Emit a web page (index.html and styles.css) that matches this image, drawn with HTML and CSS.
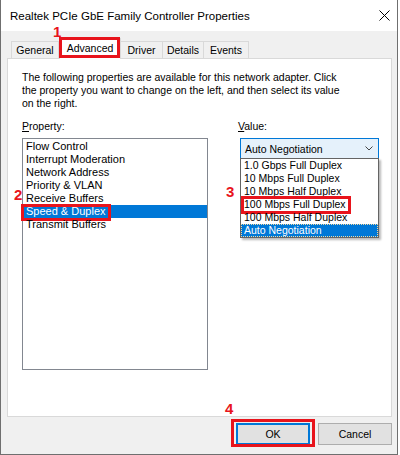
FILE: index.html
```html
<!DOCTYPE html>
<html>
<head>
<meta charset="utf-8">
<link rel="stylesheet" href="styles.css">
</head>
<body>
<div class="window">
  <div class="titlebar">
    <span class="title">Realtek PCIe GbE Family Controller Properties</span>
    <svg class="close" width="11" height="11" viewBox="0 0 11 11"><path d="M0.5 0.5L10.5 10.5M10.5 0.5L0.5 10.5" stroke="#000" stroke-width="1" fill="none"/></svg>
  </div>
  <div class="client">
    <div class="tabs">
      <div class="tab tab-general">General</div>
      <div class="tab tab-advanced">Advanced<span class="mark mark-tab"></span><span class="num num1">1</span></div>
      <div class="tab tab-driver">Driver</div>
      <div class="tab tab-details">Details</div>
      <div class="tab tab-events">Events</div>
    </div>
    <div class="page">
      <p class="intro">The following properties are available for this network adapter. Click<br>the property you want to change on the left, and then select its value<br>on the right.</p>
      <div class="cols">
        <div class="col">
          <div class="label"><u>P</u>roperty:</div>
          <div class="listbox">
            <div class="item">Flow Control</div>
            <div class="item">Interrupt Moderation</div>
            <div class="item">Network Address</div>
            <div class="item">Priority &amp; VLAN</div>
            <div class="item">Receive Buffers</div>
            <div class="item selected">Speed &amp; Duplex<span class="mark mark-speed"></span><span class="num num2">2</span></div>
            <div class="item">Transmit Buffers</div>
          </div>
        </div>
        <div class="col">
          <div class="label"><u>V</u>alue:</div>
          <div class="combo">
            <span>Auto Negotiation</span>
            <svg class="chev" width="8" height="5" viewBox="0 0 8 5"><path d="M0.5 0.5L4 4L7.5 0.5" stroke="#444" stroke-width="1" fill="none"/></svg>
            <div class="dropdown">
              <div class="opt">1.0 Gbps Full Duplex</div>
              <div class="opt">10 Mbps Full Duplex</div>
              <div class="opt">10 Mbps Half Duplex</div>
              <div class="opt opt-mark">100 Mbps Full Duplex<span class="mark mark-opt"></span><span class="num num3">3</span></div>
              <div class="opt">100 Mbps Half Duplex</div>
              <div class="opt opt-selected">Auto Negotiation</div>
            </div>
          </div>
        </div>
      </div>
    </div>
    <div class="buttons">
      <button class="btn btn-default">OK<span class="mark mark-ok"></span><span class="num num4">4</span></button>
      <button class="btn">Cancel</button>
    </div>
  </div>
</div>
</body>
</html>
```
FILE: styles.css
```css
html, body {
  margin: 0;
  padding: 0;
  background: #ffffff;
}

.window {
  width: 398px;
  height: 455px;
  box-sizing: border-box;
  border: 1px solid #6f6f6f;
  border-top: none;
  display: flex;
  flex-direction: column;
  font-family: "Liberation Sans", Arial, sans-serif;
  color: #000;
}

.titlebar {
  flex: none;
  height: 31px;
  background: #fff;
  display: flex;
  align-items: center;
  justify-content: space-between;
  padding: 0 7px 0 9px;
}

.title {
  font-size: 11.5px;
}

.close {
  display: block;
}

.client {
  flex: 1;
  background: #f0f0f0;
  padding: 7px 5px 0 6px;
  display: flex;
  flex-direction: column;
}

.tabs {
  display: flex;
  align-items: flex-end;
  height: 20px;
  padding-left: 4px;
  position: relative;
  z-index: 1;
}

.tab {
  height: 17px;
  box-sizing: border-box;
  border: 1px solid #d9d9d9;
  border-bottom: none;
  background: #f0f0f0;
  font-size: 10.5px;
  display: flex;
  align-items: center;
  justify-content: center;
  white-space: nowrap;
}

.tab-general { width: 48px; }
.tab-advanced {
  width: 62px;
  height: 21px;
  margin-bottom: -1px;
  background: #fff;
  position: relative;
  z-index: 2;
  padding-bottom: 2px;
}
.tab-driver { width: 43px; margin-left: -1px; }
.tab-details { width: 42px; margin-left: -1px; }
.tab-events { width: 46px; margin-left: -1px; }

.page {
  flex: none;
  height: 359px;
  box-sizing: border-box;
  border: 1px solid #d9d9d9;
  background: #fff;
  padding: 12px 0 0 14px;
}

.intro {
  margin: 0;
  font-size: 10.5px;
  line-height: 13px;
  white-space: nowrap;
}

.cols {
  display: grid;
  grid-template-columns: 186px 141px;
  column-gap: 30px;
  margin-top: 10px;
}

.label {
  font-size: 10.5px;
  line-height: 13px;
}

.listbox {
  margin-top: 5px;
  height: 232px;
  box-sizing: border-box;
  border: 1px solid #828790;
  padding-top: 1px;
}

.item {
  height: 13px;
  line-height: 13px;
  font-size: 11px;
  padding-left: 3px;
  white-space: nowrap;
  position: relative;
}

.item.selected {
  background: #0078d7;
  color: #fff;
}

.combo {
  margin: 5px 0 0 2px;
  height: 21px;
  box-sizing: border-box;
  border: 1px solid #0078d7;
  background: #e5f1fb;
  display: flex;
  align-items: center;
  justify-content: space-between;
  padding: 0 5px 0 4px;
  font-size: 10.5px;
  position: relative;
}

.chev {
  display: block;
}

.dropdown {
  position: absolute;
  left: -1px;
  top: 19px;
  width: 139px;
  box-sizing: border-box;
  border: 1px solid #646464;
  background: #fff;
  box-shadow: 2px 2px 2px rgba(0, 0, 0, 0.28);
  z-index: 3;
}

.opt {
  height: 13px;
  line-height: 13px;
  font-size: 10.5px;
  padding-left: 3px;
  white-space: nowrap;
  position: relative;
}

.opt-selected {
  background: #0078d7;
  color: #fff;
  box-sizing: border-box;
  border: 1px dotted #f3d9a0;
  line-height: 11px;
  padding-left: 2px;
}

.buttons {
  display: flex;
  justify-content: flex-end;
  gap: 8px;
  margin-top: 6px;
}

.btn {
  width: 74px;
  height: 22px;
  box-sizing: border-box;
  border: 1px solid #adadad;
  background: #e1e1e1;
  font-family: "Liberation Sans", Arial, sans-serif;
  font-size: 10.5px;
  color: #000;
  padding: 0;
  margin: 0;
}

.btn-default {
  border: 2px solid #0078d7;
  position: relative;
}

/* annotation overlays */
.mark {
  position: absolute;
  box-sizing: border-box;
  border: 3px solid #e8141c;
}

.mark-tab { left: -1px; top: -2px; width: 61px; height: 21px; }
.mark-speed { left: -2px; top: -1px; width: 90px; height: 17px; }
.mark-opt { left: 0; top: -2px; width: 110px; height: 18px; }
.mark-ok { left: -7px; top: -6px; width: 84px; height: 28px; }

.num {
  position: absolute;
  font-family: "Liberation Sans", Arial, sans-serif;
  font-weight: bold;
  font-size: 15px;
  line-height: 15px;
  color: #e8141c;
}

.num1 { left: -7px; top: -15px; }
.num2 { left: -9px; top: -18px; }
.num3 { left: -15px; top: -14px; }
.num4 { left: -13px; top: -24px; }
```
